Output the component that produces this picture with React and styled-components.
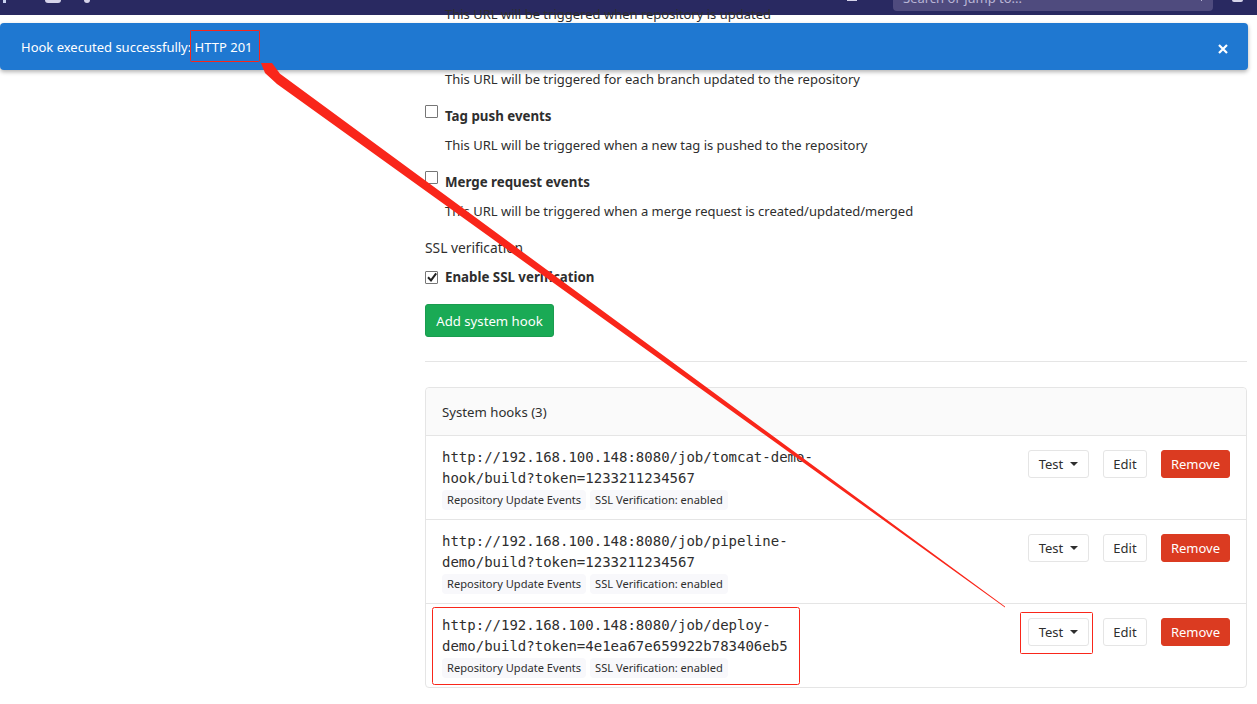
import React from "react";
import styled, { createGlobalStyle } from "styled-components";

const GlobalStyle = createGlobalStyle`
  html, body {
    margin: 0;
    padding: 0;
    background: #fff;
    overflow: hidden;
  }
  body {
    font-family: "Noto Sans", "Open Sans", sans-serif;
    font-size: 13px;
    color: #2e2e2e;
  }
`;

const Page = styled.div`
  position: relative;
  width: 1257px;
  height: 704px;
  overflow: hidden;
`;

const Navbar = styled.header`
  height: 15px;
  background: #292961;
  display: flex;
  align-items: flex-start;
  overflow: hidden;
`;

// the page is scrolled, so only the bottoms of the nav icons show
const NavStub = styled.span`
  flex: none;
  display: block;
  width: ${({ $width }) => $width}px;
  height: ${({ $height }) => $height}px;
  margin-left: ${({ $left }) => $left}px;
  background: ${({ $color }) => $color};
  border-radius: ${({ $round }) => ($round ? "0 0 4px 4px" : "0")};
`;

const SearchBox = styled.div`
  flex: none;
  position: relative;
  width: 320px;
  height: 11px;
  margin-left: 36px;
  padding: 0 10px;
  box-sizing: border-box;
  overflow: hidden;
  background: #4f4b7e;
  border-radius: 0 0 4px 4px;
`;

const SearchText = styled.span`
  display: block;
  margin-top: -12px;
  font-size: 13px;
  line-height: 20px;
  color: #b9b6d6;
`;

const SearchHint = styled.span`
  position: absolute;
  top: 0;
  right: 11px;
  width: 1px;
  height: 1px;
  background: #b9b6d6;
`;

const Content = styled.main`
  padding: 0 10px 0 425px;
`;

const HelpText = styled.p`
  margin: ${({ $top }) => $top || 0}px 0 0;
  height: 20px;
  line-height: 20px;
  padding-left: 20px;
  color: #2e2e2e;
`;

const EventRow = styled.label`
  display: flex;
  align-items: center;
  height: 20px;
  margin-top: ${({ $top }) => $top}px;
  margin-bottom: 9px;
  font-size: 13.3px;
  font-weight: 700;
  gap: 7px;
`;

const Check = styled.span`
  width: 13px;
  height: 13px;
  box-sizing: border-box;
  border: 1px solid #767676;
  border-radius: 1px;
  background: #fff;
  position: relative;
  top: ${({ $up }) => $up}px;
  display: flex;
  align-items: center;
  justify-content: center;
`;

const FieldTitle = styled.div`
  height: 20px;
  line-height: 20px;
  margin-top: 17px;
  font-size: 13.8px;
`;

const SaveButton = styled.button`
  display: block;
  margin-top: 17px;
  height: 33px;
  width: 129px;
  padding: 0;
  border: 1px solid #1a9c4f;
  border-radius: 3px;
  background: #1aaa55;
  color: #fff;
  font: inherit;
  font-size: 13.2px;
`;

const Divider = styled.hr`
  margin: 24px 0 25px;
  border: 0;
  border-top: 1px solid #e5e5e5;
`;

const Card = styled.section`
  border: 1px solid #e5e5e5;
  border-radius: 4px;
`;

const CardHeader = styled.div`
  height: 47px;
  padding-left: 16px;
  display: flex;
  align-items: center;
  background: #fafafa;
  border-bottom: 1px solid #e5e5e5;
  border-radius: 4px 4px 0 0;
  font-size: 13.2px;
`;

const HookRow = styled.div`
  height: ${({ $first }) => ($first ? 83 : 84)}px;
  box-sizing: border-box;
  padding: 11px 16px 0;
  display: flex;
  justify-content: space-between;
  border-top: ${({ $first }) => ($first ? "0" : "1px solid #e5e5e5")};
`;

const HookInfo = styled.div`
  width: 372px;
`;

const HookUrl = styled.div`
  font-family: "DejaVu Sans Mono", "Liberation Mono", monospace;
  font-size: 14px;
  line-height: 21px;
  color: #2e2e2e;
`;

const Badges = styled.div`
  display: flex;
  gap: 4px;
  margin-top: 1px;
`;

const Badge = styled.span`
  height: 20px;
  line-height: 20px;
  padding: 0 5px;
  background: #f8f8fb;
  border-radius: 4px;
  font-size: 11.1px;
  color: #2e2e2e;
  white-space: nowrap;
`;

const Actions = styled.div`
  display: flex;
  gap: 14px;
  padding-top: 3px;
`;

const ActionButton = styled.button`
  height: 28px;
  width: ${({ $width }) => $width}px;
  padding: 0;
  box-sizing: border-box;
  display: flex;
  align-items: center;
  justify-content: center;
  gap: 7px;
  border-radius: 3px;
  font: inherit;
  font-size: 13px;
  border: 1px solid ${({ $danger }) => ($danger ? "#db3b21" : "#e5e5e5")};
  background: ${({ $danger }) => ($danger ? "#db3b21" : "#fff")};
  color: ${({ $danger }) => ($danger ? "#fff" : "#2e2e2e")};
`;

const Caret = styled.span`
  width: 0;
  height: 0;
  border-left: 4px solid transparent;
  border-right: 4px solid transparent;
  border-top: 4px solid #2e2e2e;
`;

const Alert = styled.div`
  position: absolute;
  top: 23px;
  left: 0;
  width: 1248px;
  height: 47px;
  box-sizing: border-box;
  padding: 0 20px 0 21px;
  display: flex;
  align-items: center;
  justify-content: space-between;
  background: #1f78d1;
  color: #fff;
  font-size: 13px;
  border-radius: 4px;
  box-shadow: 0 2px 4px rgba(0, 0, 0, 0.3);
`;

const CloseIcon = styled.svg`
  width: 10px;
  height: 10px;
  margin-top: 4px;
`;

const Annotation = styled.svg`
  position: absolute;
  inset: 0;
  pointer-events: none;
`;

const hooks = [
  ["http://192.168.100.148:8080/job/tomcat-demo-", "hook/build?token=1233211234567"],
  ["http://192.168.100.148:8080/job/pipeline-", "demo/build?token=1233211234567"],
  ["http://192.168.100.148:8080/job/deploy-", "demo/build?token=4e1ea67e659922b783406eb5"],
];

const Tick = () => (
  <svg width="10" height="10" viewBox="0 0 10 10">
    <path d="M1 5.2 L4 8.4 L9.2 1.4" fill="none" stroke="#222" strokeWidth="2" />
  </svg>
);

const App = () => (
  <Page>
    <GlobalStyle />
    <Navbar>
      <NavStub $left={3} $width={3} $height={3} $color="#c9d2f0" />
      <NavStub $left={39} $width={16} $height={3} $color="#d6d4ea" $round />
      <NavStub $left={23} $width={6} $height={3} $color="#d6d4ea" $round />
      <NavStub $left={757} $width={10} $height={1} $color="#d6d4ea" />
      <SearchBox>
        <SearchText>Search or jump to...</SearchText>
        <SearchHint />
      </SearchBox>
      <NavStub $left={19} $width={11} $height={2} $color="#d6d4ea" $round />
    </Navbar>
    <Content>
      <HelpText $top={-11}>This URL will be triggered when repository is updated</HelpText>
      <EventRow $top={16}>
        <Check $up={-5} />
        Push events
      </EventRow>
      <HelpText>This URL will be triggered for each branch updated to the repository</HelpText>
      <EventRow $top={17}>
        <Check $up={-5} />
        Tag push events
      </EventRow>
      <HelpText>This URL will be triggered when a new tag is pushed to the repository</HelpText>
      <EventRow $top={17}>
        <Check $up={-5} />
        Merge request events
      </EventRow>
      <HelpText>This URL will be triggered when a merge request is created/updated/merged</HelpText>
      <FieldTitle>SSL verification</FieldTitle>
      <EventRow $top={9}>
        <Check $up={0}>
          <Tick />
        </Check>
        Enable SSL verification
      </EventRow>
      <SaveButton>Add system hook</SaveButton>
      <Divider />
      <Card>
        <CardHeader>System hooks (3)</CardHeader>
        {hooks.map((lines, i) => (
          <HookRow key={lines[1] + i} $first={i === 0}>
            <HookInfo>
              <HookUrl>
                {lines[0]}
                <br />
                {lines[1]}
              </HookUrl>
              <Badges>
                <Badge>Repository Update Events</Badge>
                <Badge>SSL Verification: enabled</Badge>
              </Badges>
            </HookInfo>
            <Actions>
              <ActionButton $width={61}>
                Test
                <Caret />
              </ActionButton>
              <ActionButton $width={44}>Edit</ActionButton>
              <ActionButton $width={69} $danger>
                Remove
              </ActionButton>
            </Actions>
          </HookRow>
        ))}
      </Card>
    </Content>
    <Alert>
      <span>Hook executed successfully: HTTP 201</span>
      <CloseIcon viewBox="0 0 10 10">
        <path d="M1 1 L9 9 M9 1 L1 9" stroke="#fff" strokeWidth="2.2" />
      </CloseIcon>
    </Alert>
    <Annotation width="1257" height="704" viewBox="0 0 1257 704">
      <g fill="none" stroke="#f9261a" strokeWidth="1">
        <rect x="190.5" y="30.5" width="69" height="31" rx="1" />
        <rect x="432.5" y="607.5" width="367" height="77" rx="2" />
        <rect x="1020.5" y="612.5" width="72" height="41" rx="1" />
      </g>
      <path
        d="M261 63 L272 63 L280 73.7 L1005 606.5 L1005 607.5 L277 84.1 L265 73 Z"
        fill="#f9261a"
      />
    </Annotation>
  </Page>
);

export default App;
